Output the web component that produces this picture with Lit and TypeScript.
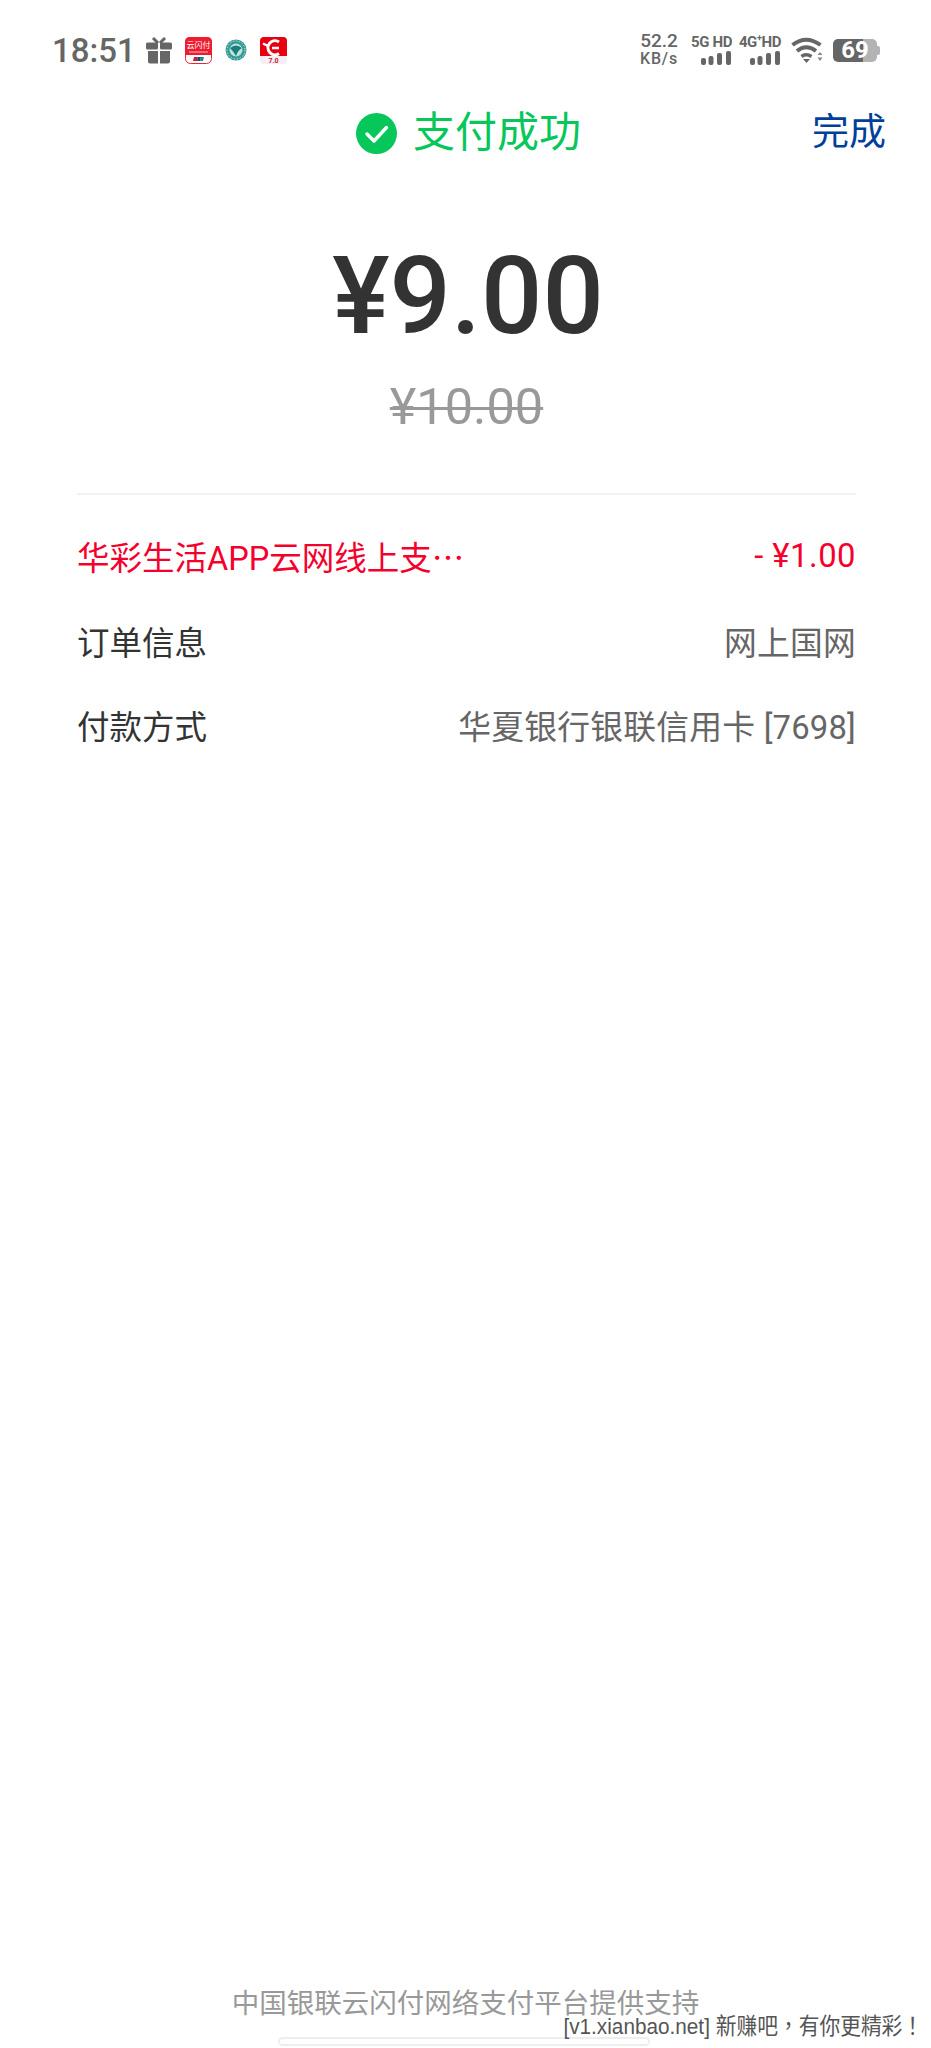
import { LitElement, html, css, svg } from 'lit'
import { customElement } from 'lit/decorators.js'

const giftIcon = svg`<svg width="26" height="27" viewBox="0 0 26 27">
  <path d="M7 1 L12 6 M19 1 L14 6" stroke="#666" stroke-width="3" fill="none"/>
  <rect x="0" y="5.500" width="12" height="7" rx="1.500" fill="#666"/>
  <rect x="14" y="5.500" width="12" height="7" rx="1.500" fill="#666"/>
  <path d="M2 14 H12 V26.500 H4 Q2 26.500 2 24.500 Z M14 14 H24 V24.500 Q24 26.500 22 26.500 H14 Z" fill="#666"/>
</svg>`

const unionPayIcon = svg`<svg width="27" height="27" viewBox="0 0 27 27">
  <rect x="0.500" y="0.500" width="26" height="26" rx="5" fill="#fff" stroke="#e8243a"/>
  <path d="M0 5 Q0 0 5 0 H22 Q27 0 27 5 V18 H0 Z" fill="#ee1c2e"/>
  <text x="13.500" y="11" font-size="8" fill="#fff" text-anchor="middle" font-family="Noto Sans CJK SC">云闪付</text>
  <path d="M4 15 H23" stroke="#fff" stroke-width="1" opacity=".7"/>
  <path d="M9 20 H13 L12 24 H8 Z" fill="#c8202f"/>
  <path d="M13 20 H16 L15 24 H12 Z" fill="#15497c"/>
  <path d="M16 20 H19 L18 24 H15 Z" fill="#1a8a8a"/>
</svg>`

const globeIcon = svg`<svg width="22" height="22" viewBox="0 0 22 22">
  <circle cx="11" cy="11" r="10.500" fill="#2f9a94"/>
  <circle cx="11" cy="11" r="6.500" fill="#bfe3de"/>
  <path d="M5 9 Q11 4 17 9 Q13 11 11 17 Q8 12 5 9 Z" fill="#1b7e7a"/>
  <circle cx="11" cy="11" r="9" fill="none" stroke="#d5ece9" stroke-width="1" stroke-dasharray="1.500 1.500"/>
</svg>`

const couponIcon = svg`<svg width="27" height="27" viewBox="0 0 27 27">
  <path d="M0 19 V4 Q0 0 4 0 H23 Q27 0 27 4 V19 Z" fill="#e60012"/>
  <path d="M0 19 H27 V23 Q27 27 23 27 H4 Q0 27 0 23 Z" fill="#f6eef4"/>
  <path d="M19 5 A7 7 0 1 0 19 16.500" fill="none" stroke="#fff" stroke-width="3"/>
  <path d="M3 6.500 L9 9.500 M12 11 H19" stroke="#fff" stroke-width="2.400"/>
  <text x="13.500" y="26" font-size="7" font-weight="700" fill="#c8202f" text-anchor="middle" font-family="Roboto">7.0</text>
</svg>`

const signalBars = svg`<svg width="31" height="14" viewBox="0 0 31 14">
  <rect x="0" y="7" width="5" height="7" rx="2" fill="#666"/>
  <rect x="7.500" y="5" width="5" height="9" rx="2" fill="#666"/>
  <rect x="16" y="2" width="5" height="12" rx="2" fill="#666"/>
  <rect x="25" y="0" width="5" height="14" rx="2" fill="#666"/>
</svg>`

const wifiIcon = svg`<svg width="32" height="26" viewBox="0 0 32 26">
  <path d="M1.500 8 Q15 -2.500 29.500 8" fill="none" stroke="#666" stroke-width="4"/>
  <path d="M6 14 Q15 6.500 25 14" fill="none" stroke="#666" stroke-width="4"/>
  <path d="M10.500 19.500 Q15 16 20.500 19.500" fill="none" stroke="#666" stroke-width="3.600"/>
  <path d="M12 22 H19 L15.500 26 Z" fill="#666"/>
  <path d="M26.500 18 L29 15 L31.500 18 Z M26.500 20.500 H31.500 L29 24 Z" fill="#888"/>
</svg>`

const checkIcon = svg`<svg width="41" height="41" viewBox="0 0 41 41">
  <circle cx="20.500" cy="20.500" r="20.500" fill="#07c75a"/>
  <path d="M11 21 L18 28 L30.500 14.500" fill="none" stroke="#fff" stroke-width="3.400" stroke-linecap="round" stroke-linejoin="round"/>
</svg>`

@customElement('app-root')
export class AppRoot extends LitElement {
    static styles = css`
        :host {
            display: block;
            position: relative;
            height: 2048px;
            overflow: hidden;
            background: #fff;
            font-family: Roboto, 'Noto Sans CJK SC', sans-serif;
        }

        .page {
            display: flex;
            flex-direction: column;
            height: 2048px;
        }

        .status {
            display: flex;
            align-items: center;
            justify-content: space-between;
            height: 50px;
            padding: 25px 51px 0 52px;
            color: #666;
        }

        .status-left,
        .status-right {
            display: flex;
            align-items: center;
        }

        .time {
            font-size: 33px;
            font-weight: 500;
            width: 81px;
        }

        .status-left {
            gap: 13px;
        }

        .status-right {
            gap: 10px;
        }

        .speed {
            display: flex;
            flex-direction: column;
            align-items: center;
            font-weight: 500;
            line-height: 18px;
            width: 40px;
        }

        .speed b {
            font-size: 19px;
            font-weight: 500;
        }

        .speed span {
            font-size: 16px;
            letter-spacing: 0.800px;
        }

        .net {
            display: flex;
            flex-direction: column;
            align-items: flex-end;
            gap: 1px;
            width: 41px;
            font-size: 15px;
            font-weight: 700;
            letter-spacing: -0.400px;
            line-height: 15px;
            white-space: nowrap;
        }

        .net.first {
            margin-left: 2px;
            margin-right: -2px;
        }

        .net sup {
            font-size: 9px;
            line-height: 0;
        }

        .battery {
            display: flex;
            align-items: center;
        }

        .battery-body {
            width: 44px;
            height: 23px;
            border-radius: 5px;
            background: linear-gradient(90deg, #666 0 69%, #b3b3b3 69%);
            color: #fff;
            font-size: 24px;
            font-weight: 700;
            line-height: 23px;
            text-align: center;
        }

        .battery-tip {
            width: 3px;
            height: 9px;
            border-radius: 0 2px 2px 0;
            background: #b3b3b3;
        }

        .title-row {
            position: relative;
            display: flex;
            align-items: center;
            justify-content: center;
            gap: 16px;
            margin-top: 33px;
            height: 50px;
            padding-left: 6px;
        }

        .title {
            color: #07c75a;
            font-size: 42px;
            line-height: 50px;
        }

        .done {
            position: absolute;
            right: 45px;
            top: 0;
            color: #004098;
            font-size: 37px;
            line-height: 50px;
        }

        .amount {
            margin-top: 73px;
            padding-left: 5px;
            color: #333;
            font-size: 108px;
            font-weight: 500;
            line-height: 130px;
            text-align: center;
        }

        .origin {
            margin-top: 13px;
            padding-left: 2px;
            color: #999;
            font-size: 50.500px;
            line-height: 66px;
            text-align: center;
        }

        .origin span {
            text-decoration: line-through;
            text-decoration-thickness: 3px;
        }

        .rows {
            display: flex;
            flex-direction: column;
            margin: 53px 75px 0 77px;
            border-top: 2px solid #f2f2f2;
            padding-top: 18px;
        }

        .row {
            display: flex;
            align-items: center;
            justify-content: space-between;
            height: 85px;
            color: #333;
            font-size: 32.500px;
        }

        .row + .row {
            margin-top: -0.500px;
        }

        .row span:last-child {
            color: #666;
            font-size: 32.800px;
            letter-spacing: 0.200px;
        }

        .row.discount {
            color: #f5002d;
        }

        .row.discount > span:last-child {
            color: #f5002d;
            letter-spacing: 0.500px;
        }

        .row .dots {
            font-family: 'Noto Sans CJK SC', sans-serif;
            font-style: normal;
        }

        .support {
            margin-top: auto;
            margin-bottom: 26px;
            color: #999;
            font-size: 27.500px;
            line-height: 36px;
            text-align: center;
        }

        .home-bar {
            position: absolute;
            left: 278px;
            top: 2037px;
            width: 372px;
            height: 9px;
            box-sizing: border-box;
            border: 2px solid #eee;
            border-radius: 5px;
        }

        .watermark {
            position: absolute;
            right: 8px;
            top: 2013px;
            color: #555;
            font-family: 'Liberation Sans', 'Noto Sans CJK TC', sans-serif;
            font-size: 22.500px;
            line-height: 28px;
            white-space: nowrap;
            transform: scaleX(0.922);
            transform-origin: right center;
        }
    `

    render() {
        return html`
            <div class="page">
                <div class="status">
                    <div class="status-left">
                        <span class="time">18:51</span>
                        ${giftIcon} ${unionPayIcon} ${globeIcon} ${couponIcon}
                    </div>
                    <div class="status-right">
                        <div class="speed"><b>52.2</b><span>KB/s</span></div>
                        <div class="net first"><span>5G HD</span>${signalBars}</div>
                        <div class="net"><span>4G<sup>+</sup>HD</span>${signalBars}</div>
                        ${wifiIcon}
                        <div class="battery">
                            <div class="battery-body">69</div>
                            <div class="battery-tip"></div>
                        </div>
                    </div>
                </div>
                <div class="title-row">
                    ${checkIcon}
                    <span class="title">支付成功</span>
                    <span class="done">完成</span>
                </div>
                <div class="amount">¥9.00</div>
                <div class="origin"><span>¥10.00</span></div>
                <div class="rows">
                    <div class="row discount">
                        <div>华彩生活APP云网线上支<i class="dots">…</i></div>
                        <span>- ¥1.00</span>
                    </div>
                    <div class="row"><span>订单信息</span><span>网上国网</span></div>
                    <div class="row"><span>付款方式</span><span>华夏银行银联信用卡 [7698]</span></div>
                </div>
                <div class="support">中国银联云闪付网络支付平台提供支持</div>
            </div>
            <div class="home-bar"></div>
            <div class="watermark">[v1.xianbao.net] 新赚吧，有你更精彩！</div>
        `
    }
}
